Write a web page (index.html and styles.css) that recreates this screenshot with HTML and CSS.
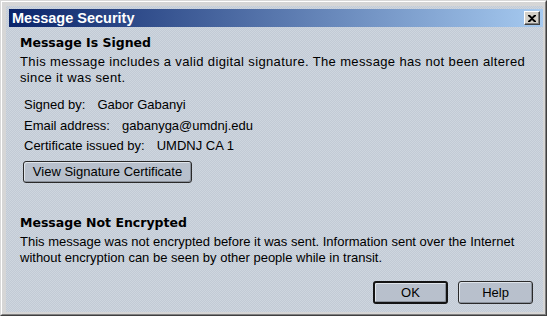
FILE: index.html
```html
<!DOCTYPE html>
<html>
<head>
<meta charset="utf-8">
<link rel="stylesheet" href="styles.css">
</head>
<body>
<div class="window">
  <div class="inner">
    <div class="client">
      <div class="titlebar">
        <span class="title">Message Security</span>
        <span class="close">
          <svg width="8" height="7" viewBox="0 0 8 7"><path d="M0 0h2l2 2 2-2h2v1L5 3.5 8 6v1H6L4 5 2 7H0V6l3-2.5L0 1z" fill="#000"/></svg>
        </span>
      </div>
      <div class="content">
        <section class="signed">
          <h2 class="heading">Message Is Signed</h2>
          <p class="para wide">This message includes a valid digital signature. The message has not been altered since it was sent.</p>
          <div class="details">
            <div class="row"><span class="label">Signed by:</span><span>Gabor Gabanyi</span></div>
            <div class="row"><span class="label">Email address:</span><span>gabanyga@umdnj.edu</span></div>
            <div class="row"><span class="label">Certificate issued by:</span><span>UMDNJ CA 1</span></div>
            <button class="btn cert">View Signature Certificate</button>
          </div>
        </section>
        <section class="encrypt">
          <h2 class="heading">Message Not Encrypted</h2>
          <p class="para">This message was not encrypted before it was sent. Information sent over the Internet without encryption can be seen by other people while in transit.</p>
        </section>
        <div class="actions">
          <button class="btn ok">OK</button>
          <button class="btn help">Help</button>
        </div>
      </div>
    </div>
  </div>
</div>
</body>
</html>
```
FILE: styles.css
```css
html, body {
  margin: 0;
  padding: 0;
  background: #ffffff;
}
body {
  width: 551px;
  height: 322px;
  overflow: hidden;
  font-family: "Liberation Sans", Arial, sans-serif;
  font-size: 13px;
  color: #000;
}
.window {
  width: 547px;
  height: 316px;
  box-sizing: border-box;
  border: 1px solid;
  border-color: #d8d8d8 #404040 #404040 #d8d8d8;
  background: #dcdcdc;
}
.inner {
  height: 100%;
  box-sizing: border-box;
  border: 1px solid;
  border-color: #ffffff #808080 #808080 #ffffff;
  padding: 4px 2px 2px 4px;
  background: #d6d6d6;
}
.client {
  height: 100%;
  box-sizing: border-box;
  padding: 3px 0 0 3px;
  display: flex;
  flex-direction: column;
  background-color: #c8d0da;
  background-image: repeating-conic-gradient(#c2cad5 0 25%, #ced6df 0 50%);
  background-size: 2px 2px;
}
.titlebar {
  height: 18px;
  flex: none;
  display: flex;
  align-items: center;
  justify-content: space-between;
  padding: 0 3px 0 3px;
  background: linear-gradient(to right, #0a246a, #a6caf0);
}
.title {
  color: #fff;
  font-weight: bold;
  font-size: 14.5px;
}
.close {
  width: 16px;
  height: 14px;
  box-sizing: border-box;
  background: #d4d0c8;
  border: 1px solid;
  border-color: #ffffff #404040 #404040 #ffffff;
  box-shadow: inset -1px -1px 0 #808080;
  display: flex;
  align-items: center;
  justify-content: center;
}
.content {
  flex: 1;
  display: flex;
  flex-direction: column;
  padding: 0 0 0 11px;
}
.heading {
  margin: 0;
  font-family: "DejaVu Sans", Verdana, sans-serif;
  font-weight: bold;
  font-size: 12.5px;
  line-height: 16px;
}
.signed .heading {
  margin-top: 8px;
}
.para {
  margin: 3px 0 0 0;
  line-height: 16px;
  width: 520px;
}
.wide {
  letter-spacing: 0.36px;
}
.details {
  margin: 9px 0 0 4px;
  display: flex;
  flex-direction: column;
  align-items: flex-start;
}
.row {
  line-height: 20.5px;
}
.label {
  margin-right: 12px;
}
.btn {
  font-family: "Liberation Sans", Arial, sans-serif;
  font-size: 13px;
  color: #000;
  background: #b8c0cc;
  border: 1px solid #2a2a2a;
  border-radius: 3px;
  box-shadow: inset 1px 1px 0 #dfe4ea, inset -1px -1px 0 #8a919b;
  padding: 0;
  height: 22px;
}
.cert {
  width: 169px;
  margin: 4px 0 0 -1px;
}
.encrypt {
  margin-top: 32px;
}
.encrypt .para {
  margin-top: 3px;
}
.actions {
  margin-top: auto;
  margin-bottom: 8px;
  display: flex;
  justify-content: flex-end;
  gap: 10px;
  padding-right: 10px;
}
.ok, .help {
  width: 75px;
  height: 23px;
}
.ok {
  border-width: 2px;
  border-color: #141414;
}
```
